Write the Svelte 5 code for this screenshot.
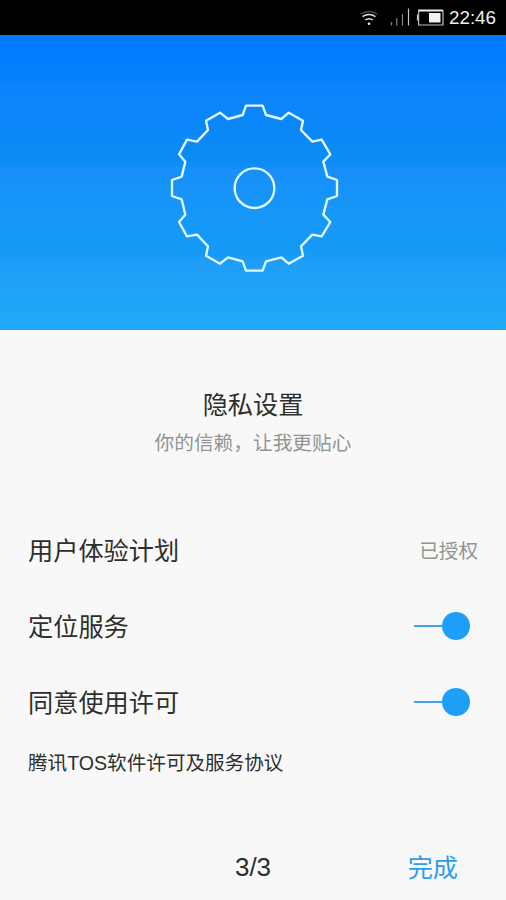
<script>
  let options = $state([
    { label: '定位服务', on: true },
    { label: '同意使用许可', on: true }
  ]);
</script>

<main class="screen">
  <header class="status">
    <svg class="signals" width="100" height="35" viewBox="0 0 100 35" fill="none">
      <path d="M15.5 14.2Q24 8.8 32.5 14.2" stroke="#4d4d4d" stroke-width="1.3" />
      <path d="M17.5 16.6Q24 12.6 30.5 16.6M20.2 20Q24 17.3 27.8 20" stroke="#e2e2e2" stroke-width="1.5" />
      <circle cx="24" cy="23.8" r="1.3" fill="#ededed" />
      <path d="M46.5 22v3.5M51.8 18v7.5M57.5 14v11.5" stroke="#858585" stroke-width="1.2" />
      <path d="M63.5 8.5v17" stroke="#c4c4c4" stroke-width="1.2" />
      <path d="M73 10.5H98" stroke="#ececec" stroke-width="2" />
      <path d="M73.6 10v15H98V10" stroke="#bdbdbd" stroke-width="1.2" />
      <path d="M72.5 14.5v6" stroke="#c7c7c7" stroke-width="1.2" />
      <rect x="84" y="13" width="11.5" height="9.5" fill="#f2f2ef" />
    </svg>
    <time>22:46</time>
  </header>

  <section class="hero">
    <svg width="190" height="190" viewBox="0 0 570 570" fill="none" stroke="#e2faff" stroke-width="7" stroke-linejoin="round">
      <path d="M248 60L258 32H308L318 60L364 72L386 53L429 77L423 105L457 140L485 134L511 178L490 200L502 245L531 255V303L502 313L490 359L511 381L485 424L457 419L423 454L429 482L386 506L364 487L318 499L308 527H258L248 499L204 487L180 506L138 482L144 454L111 419L81 424L57 381L76 359L65 313L36 303V255L65 245L76 200L57 178L81 134L111 140L144 105L138 77L180 53L204 72Z" />
      <circle cx="283.5" cy="279.5" r="59.5" />
    </svg>
  </section>

  <section class="intro">
    <h1>隐私设置</h1>
    <p>你的信赖，让我更贴心</p>
  </section>

  <section class="settings">
    <div class="row">
      <span>用户体验计划</span>
      <span class="state">已授权</span>
    </div>
    {#each options as option}
      <div class="row">
        <span>{option.label}</span>
        <button
          class="toggle"
          class:off={!option.on}
          role="switch"
          aria-checked={option.on}
          aria-label={option.label}
          onclick={() => (option.on = !option.on)}
        >
          <span class="track"></span><span class="knob"></span>
        </button>
      </div>
    {/each}
    <div class="terms">腾讯TOS软件许可及服务协议</div>
  </section>

  <footer>
    <span></span>
    <span class="page">3/3</span>
    <button class="done">完成</button>
  </footer>
</main>

<style>
  .screen {
    width: 506px;
    height: 900px;
    display: flex;
    flex-direction: column;
    overflow: hidden;
    background: #f8f8f8;
    color: #2d2f2d;
    font-family: 'Liberation Sans', 'Noto Sans CJK SC', sans-serif;
  }
  .status {
    height: 35px;
    flex: none;
    display: flex;
    justify-content: flex-end;
    align-items: center;
    gap: 4px;
    padding-right: 10px;
    background: #000;
    color: #eee;
  }
  time {
    font-size: 18.8px;
    line-height: 35px;
  }
  .hero {
    height: 295px;
    flex: none;
    display: flex;
    justify-content: center;
    padding: 60px 0 0 4px;
    box-sizing: border-box;
    background: linear-gradient(#007aff, #057ffc 14%, #0e83fa 18%, #0b88f8 32%, #0b8cf5 42%, #178ff9 46%, #1698f8 62%, #1499f5 73%, #1f9ff8 78%, #20aaf8);
  }
  .intro {
    height: 183px;
    flex: none;
    padding-top: 56px;
    box-sizing: border-box;
    text-align: center;
  }
  h1 {
    margin: 0;
    font-size: 25.2px;
    font-weight: 400;
    line-height: 38px;
  }
  p {
    margin: 4px 0 0;
    font-size: 19.7px;
    line-height: 30px;
    color: #929592;
  }
  .settings {
    flex: none;
    padding: 0 28px;
  }
  .row {
    height: 76px;
    display: flex;
    align-items: center;
    justify-content: space-between;
    font-size: 25.2px;
    line-height: 38px;
  }
  .state {
    font-size: 19.6px;
    color: #929592;
  }
  button {
    padding: 0;
    border: 0;
    background: none;
    font-family: inherit;
  }
  .toggle {
    display: flex;
    align-items: center;
    margin: 0 8px 2px 0;
  }
  .track {
    width: 28px;
    height: 2px;
    background: #43a5e8;
  }
  .knob {
    width: 28.5px;
    height: 28.5px;
    border-radius: 50%;
    background: #1e9ff7;
  }
  .off {
    flex-direction: row-reverse;
    filter: grayscale(1);
  }
  .terms {
    margin-top: 7px;
    font-size: 19.6px;
    line-height: 30px;
  }
  footer {
    display: grid;
    grid-template-columns: 1fr auto 1fr;
    align-items: center;
    height: 66px;
    margin-top: auto;
    padding-right: 48px;
    padding-left: 48px;
    font-size: 25.2px;
  }
  .page {
    font-size: 26px;
  }
  .done {
    justify-self: end;
    margin-bottom: 3px;
    font-size: 25.2px;
    color: #2a9df0;
  }
</style>
